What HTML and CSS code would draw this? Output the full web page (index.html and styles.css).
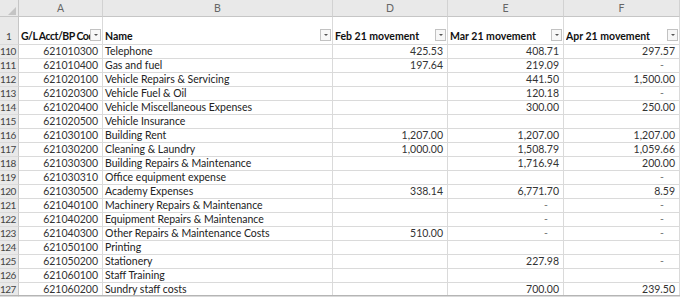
FILE: index.html
```html
<!DOCTYPE html>
<html>
<head>
<meta charset="utf-8">
<link rel="stylesheet" href="styles.css">
</head>
<body>
<div class="sheet">
  <div class="ch corner"><svg width="19" height="17" viewBox="0 0 19 17"><polygon points="16,7 16,15 8,15" fill="#c4c4c4"/></svg></div>
  <div class="ch">A</div>
  <div class="ch">B</div>
  <div class="ch">D</div>
  <div class="ch">E</div>
  <div class="ch">F</div>

  <div class="rh hdr-rh">1</div>
  <div class="hc"><span class="ht tight">G/L Acct/BP Code</span><span class="dd"></span></div>
  <div class="hc"><span class="ht">Name</span><span class="dd"></span></div>
  <div class="hc"><span class="ht">Feb 21 movement</span><span class="dd"></span></div>
  <div class="hc"><span class="ht">Mar 21 movement</span><span class="dd"></span></div>
  <div class="hc"><span class="ht">Apr 21 movement</span><span class="dd"></span></div>

  <div class="rh">110</div><div class="c n">621010300</div><div class="c">Telephone</div><div class="c n">425.53</div><div class="c n">408.71</div><div class="c n">297.57</div>
  <div class="rh">111</div><div class="c n">621010400</div><div class="c">Gas and fuel</div><div class="c n">197.64</div><div class="c n">219.09</div><div class="c n dash">-</div>
  <div class="rh">112</div><div class="c n">621020100</div><div class="c">Vehicle Repairs &amp; Servicing</div><div class="c n"></div><div class="c n">441.50</div><div class="c n">1,500.00</div>
  <div class="rh">113</div><div class="c n">621020300</div><div class="c">Vehicle Fuel &amp; Oil</div><div class="c n"></div><div class="c n">120.18</div><div class="c n dash">-</div>
  <div class="rh">114</div><div class="c n">621020400</div><div class="c">Vehicle Miscellaneous Expenses</div><div class="c n"></div><div class="c n">300.00</div><div class="c n">250.00</div>
  <div class="rh">115</div><div class="c n">621020500</div><div class="c">Vehicle Insurance</div><div class="c n"></div><div class="c n"></div><div class="c n"></div>
  <div class="rh">116</div><div class="c n">621030100</div><div class="c">Building Rent</div><div class="c n">1,207.00</div><div class="c n">1,207.00</div><div class="c n">1,207.00</div>
  <div class="rh">117</div><div class="c n">621030200</div><div class="c">Cleaning &amp; Laundry</div><div class="c n">1,000.00</div><div class="c n">1,508.79</div><div class="c n">1,059.66</div>
  <div class="rh">118</div><div class="c n">621030300</div><div class="c">Building Repairs &amp; Maintenance</div><div class="c n"></div><div class="c n">1,716.94</div><div class="c n">200.00</div>
  <div class="rh">119</div><div class="c n">621030310</div><div class="c">Office equipment expense</div><div class="c n"></div><div class="c n"></div><div class="c n dash">-</div>
  <div class="rh">120</div><div class="c n">621030500</div><div class="c">Academy Expenses</div><div class="c n">338.14</div><div class="c n">6,771.70</div><div class="c n">8.59</div>
  <div class="rh">121</div><div class="c n">621040100</div><div class="c">Machinery Repairs &amp; Maintenance</div><div class="c n"></div><div class="c n dash">-</div><div class="c n dash">-</div>
  <div class="rh">122</div><div class="c n">621040200</div><div class="c">Equipment Repairs &amp; Maintenance</div><div class="c n"></div><div class="c n dash">-</div><div class="c n dash">-</div>
  <div class="rh">123</div><div class="c n">621040300</div><div class="c">Other Repairs &amp; Maintenance Costs</div><div class="c n">510.00</div><div class="c n dash">-</div><div class="c n dash">-</div>
  <div class="rh">124</div><div class="c n">621050100</div><div class="c">Printing</div><div class="c n"></div><div class="c n"></div><div class="c n"></div>
  <div class="rh">125</div><div class="c n">621050200</div><div class="c">Stationery</div><div class="c n"></div><div class="c n">227.98</div><div class="c n dash">-</div>
  <div class="rh">126</div><div class="c n">621060100</div><div class="c">Staff Training</div><div class="c n"></div><div class="c n"></div><div class="c n"></div>
  <div class="rh">127</div><div class="c n">621060200</div><div class="c">Sundry staff costs</div><div class="c n"></div><div class="c n">700.00</div><div class="c n">239.50</div>
</div>
<div class="bottom-line"></div>
</body>
</html>
```

FILE: styles.css
```css
html, body {
  margin: 0;
  padding: 0;
  background: #ffffff;
  overflow: hidden;
}
body {
  width: 680px;
  height: 297px;
  position: relative;
  font-family: Lato, "Liberation Sans", sans-serif;
  font-size: 10.5px;
  color: #222;
}
.sheet {
  display: grid;
  grid-template-columns: 19px 84px 230px 115px 116px 116px;
  grid-template-rows: 17px 28px repeat(18, 14px);
}
.sheet > div {
  box-sizing: border-box;
  overflow: hidden;
  white-space: nowrap;
}
.ch {
  background: #e9e9e9;
  border-right: 1px solid #d2d2d2;
  border-bottom: 1px solid #c6c6c6;
  color: #666;
  text-align: center;
  line-height: 17px;
  font-size: 10.5px;
}
.corner {
  border-right: 1px solid #c6c6c6;
  line-height: 0;
}
.rh {
  background: #e9e9e9;
  border-right: 1px solid #c6c6c6;
  border-bottom: 1px solid #dadada;
  color: #444;
  font-size: 10px;
  letter-spacing: -0.5px;
  line-height: 13px;
  padding-left: 0;
}
.hdr-rh {
  text-align: center;
  letter-spacing: 0;
  padding: 0;
  display: flex;
  align-items: flex-end;
  justify-content: center;
  padding-bottom: 1px;
}
.hc {
  border-right: 1px solid #dadada;
  border-bottom: 1px solid #dadada;
  display: flex;
  align-items: flex-end;
  padding: 0 1px 1px 2px;
  font-weight: bold;
  color: #111;
}
.ht {
  flex: 1;
  overflow: hidden;
  white-space: nowrap;
  line-height: 14px;
  padding-right: 3px;
}
.tight {
  letter-spacing: -0.5px;
  padding-right: 1px;
}
.dd {
  flex: none;
  width: 9px;
  height: 10px;
  margin-bottom: 2px;
  border: 1px solid #c2c2c2;
  background: #f7f7f7;
  position: relative;
}
.dd::after {
  content: "";
  position: absolute;
  left: 3px;
  top: 4px;
  border-left: 2px solid transparent;
  border-right: 2px solid transparent;
  border-top: 2px solid #555;
}
.c {
  border-right: 1px solid #dadada;
  border-bottom: 1px solid #dadada;
  line-height: 13px;
  padding: 0 2px;
  color: #222;
}
.n {
  text-align: right;
  padding-right: 4px;
  color: #333;
}
.dash {
  padding-right: 15px;
  color: #777;
}
.bottom-line {
  position: absolute;
  left: 0;
  right: 0;
  top: 295px;
  height: 1px;
  background: #b5b5b5;
}
```
